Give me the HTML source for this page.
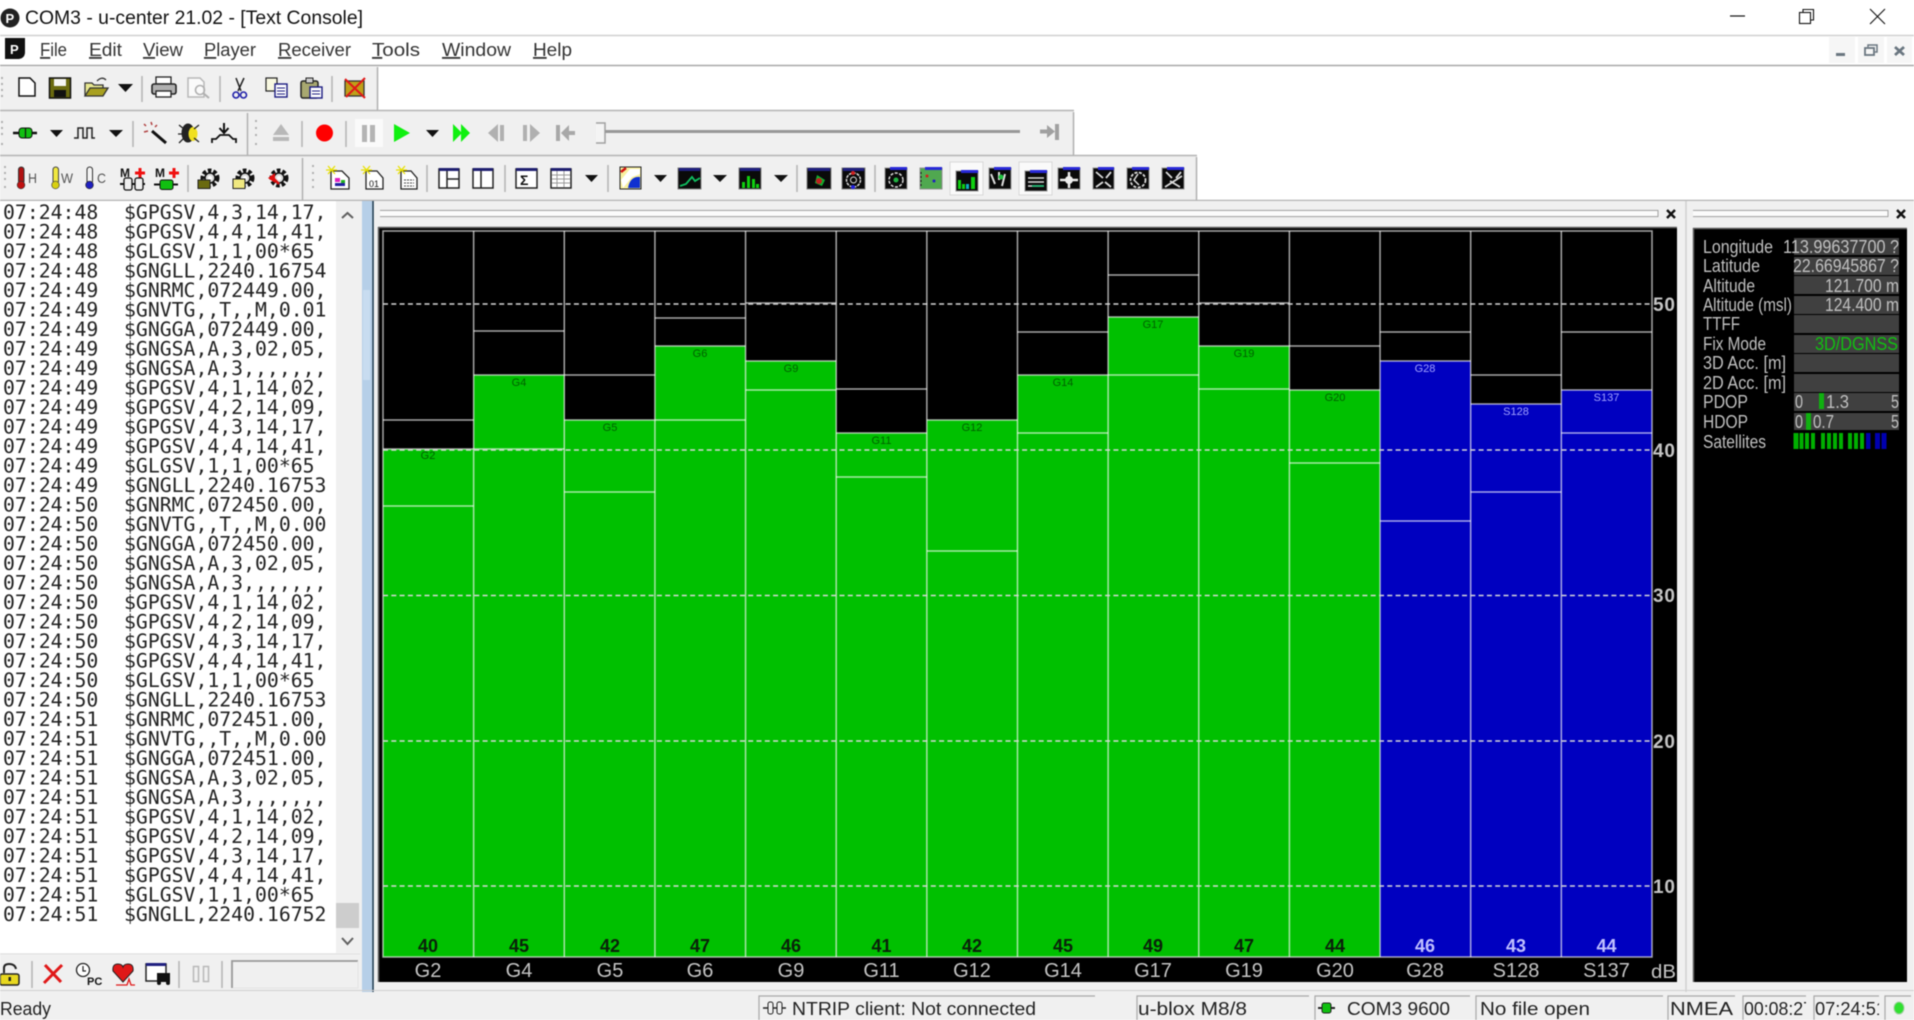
<!DOCTYPE html>
<html lang="en"><head><meta charset="utf-8"><title>COM3 - u-center 21.02 - [Text Console]</title>
<style>
html,body{margin:0;padding:0;background:#fff;width:1914px;height:1020px;overflow:hidden}
svg{display:block;filter:blur(.4px)}
text{font-family:"Liberation Sans",sans-serif}
.m text{font-family:"DejaVu Sans Mono","Liberation Mono",monospace;font-size:19.8px;fill:#222}
.mn text{font-size:18px;fill:#333}
.st text{font-size:18px;fill:#222}
.i text{font-size:18px;fill:#c0c0c0}
.sep line{stroke:#b4b4b4;stroke-width:1.5}
.arr polygon{fill:#111}
.gr rect{fill:#b0b0b0}
.top text{font-size:11px;text-anchor:middle}
.val text{font-size:18px;font-weight:bold;text-anchor:middle;fill:#0a200a}
.lab text{font-size:20px;text-anchor:middle;fill:#c4c4c4}
.ax text{font-size:19px;font-weight:bold;fill:#c4c4c4}
.bl{fill:none;stroke:rgba(255,255,255,.65);stroke-width:1.5}
.gear{fill:none;stroke:#111;stroke-width:4;stroke-dasharray:3.500 2}
.gi{fill:#ddd;stroke:#111;stroke-width:1.500}
</style></head><body>
<svg width="1914" height="1020" viewBox="0 0 1914 1020" xmlns="http://www.w3.org/2000/svg">
<rect width="1914" height="1020" fill="#fff"/>
<!-- title bar -->
<circle cx="10" cy="18" r="9.5" fill="#222"/><text x="5.5" y="23" font-size="13" font-weight="bold" fill="#fff">P</text>
<text x="25" y="24" font-size="19.5" fill="#111" textLength="338" lengthAdjust="spacingAndGlyphs">COM3 - u-center 21.02 - [Text Console]</text>
<line x1="1730" y1="16" x2="1745" y2="16" stroke="#111" stroke-width="1.2"/>
<rect x="1799.5" y="12.5" width="11" height="11" fill="#fff" stroke="#111" stroke-width="1.1"/>
<path d="M1803 12.5V9.5H1813.5V20H1810.5" fill="none" stroke="#111" stroke-width="1.1"/>
<path d="M1870 9L1885 24M1885 9L1870 24" stroke="#111" stroke-width="1.1"/>
<line x1="0" y1="35.5" x2="1914" y2="35.5" stroke="#d0d0d0" stroke-width="1.5"/>
<!-- menu bar -->
<path d="M5 38H25V52Q25 58 19 59H5Z" fill="#111"/><text x="10" y="54" font-size="13" font-weight="bold" fill="#fff">P</text>
<g class="mn">
<text x="40" y="56" textLength="27" lengthAdjust="spacingAndGlyphs"><tspan text-decoration="underline">F</tspan>ile</text>
<text x="89" y="56" textLength="33" lengthAdjust="spacingAndGlyphs"><tspan text-decoration="underline">E</tspan>dit</text>
<text x="143" y="56" textLength="40" lengthAdjust="spacingAndGlyphs"><tspan text-decoration="underline">V</tspan>iew</text>
<text x="204" y="56" textLength="52" lengthAdjust="spacingAndGlyphs"><tspan text-decoration="underline">P</tspan>layer</text>
<text x="278" y="56" textLength="73" lengthAdjust="spacingAndGlyphs"><tspan text-decoration="underline">R</tspan>eceiver</text>
<text x="372" y="56" textLength="48" lengthAdjust="spacingAndGlyphs"><tspan text-decoration="underline">T</tspan>ools</text>
<text x="442" y="56" textLength="69" lengthAdjust="spacingAndGlyphs"><tspan text-decoration="underline">W</tspan>indow</text>
<text x="533" y="56" textLength="39" lengthAdjust="spacingAndGlyphs"><tspan text-decoration="underline">H</tspan>elp</text>
</g>
<rect x="1829" y="37" width="26" height="26" fill="#f6f6f6"/><rect x="1858" y="37" width="26" height="26" fill="#f6f6f6"/><rect x="1887" y="37" width="25" height="26" fill="#f6f6f6"/>
<rect x="1836" y="53" width="9" height="3" fill="#6a7680"/>
<rect x="1865" y="48" width="9" height="7" fill="none" stroke="#6a7680" stroke-width="1.8"/><path d="M1868 47V45H1877V52H1875" fill="none" stroke="#6a7680" stroke-width="1.5"/>
<path d="M1895 47L1904 55M1904 47L1895 55" stroke="#6a7680" stroke-width="2.8"/>
<line x1="0" y1="65.5" x2="1914" y2="65.5" stroke="#a8a8a8" stroke-width="1.6"/>
<!-- toolbars -->
<rect x="0" y="67" width="377" height="43" fill="#f0f0f0"/>
<rect x="0" y="111" width="1073" height="44" fill="#f0f0f0"/>
<rect x="0" y="156" width="1197" height="44" fill="#f0f0f0"/>
<path d="M377.5 67V110M1073.5 112V155M1196.5 157V200M247.5 113V155M302.5 158V200" stroke="#b0b0b0" stroke-width="1.5" fill="none"/>
<path d="M0 110.5H1074M0 155.5H1197M0 200.5H1914" stroke="#b4b4b4" stroke-width="1.6" fill="none"/>
<g class="gr">
<rect x="1" y="77" width="2" height="2"/><rect x="1" y="83" width="2" height="2"/><rect x="1" y="89" width="2" height="2"/><rect x="1" y="95" width="2" height="2"/>
<rect x="1" y="121" width="2" height="2"/><rect x="1" y="127" width="2" height="2"/><rect x="1" y="133" width="2" height="2"/><rect x="1" y="143" width="2" height="2"/>
<rect x="4" y="166" width="2" height="2"/><rect x="4" y="172" width="2" height="2"/><rect x="4" y="178" width="2" height="2"/><rect x="4" y="186" width="2" height="2"/>
<rect x="255" y="120" width="2" height="2"/><rect x="255" y="127" width="2" height="2"/><rect x="255" y="134" width="2" height="2"/><rect x="255" y="143" width="2" height="2"/>
<rect x="312" y="165" width="2" height="2"/><rect x="312" y="172" width="2" height="2"/><rect x="312" y="179" width="2" height="2"/><rect x="312" y="186" width="2" height="2"/>
</g>
<g class="sep">
<line x1="142" y1="76" x2="142" y2="102"/><line x1="220" y1="76" x2="220" y2="102"/><line x1="332" y1="76" x2="332" y2="102"/>
<line x1="133" y1="121" x2="133" y2="147"/><line x1="302" y1="121" x2="302" y2="147"/><line x1="346" y1="121" x2="346" y2="147"/>
<line x1="188" y1="165" x2="188" y2="192"/><line x1="427" y1="165" x2="427" y2="192"/><line x1="505" y1="165" x2="505" y2="192"/><line x1="608" y1="165" x2="608" y2="192"/><line x1="797" y1="165" x2="797" y2="192"/><line x1="875" y1="165" x2="875" y2="192"/>
</g>
<g class="arr">
<polygon points="118,84 133,84 125.5,92"/>
<polygon points="50,130 63,130 56.5,137"/><polygon points="109,130 123,130 116,137"/><polygon points="426,130 439,130 432.5,137"/>
<polygon points="585,175 598,175 591.5,182"/><polygon points="654,175 667,175 660.5,182"/><polygon points="713,175 727,175 720,182"/><polygon points="774,175 788,175 781,182"/>
</g>
<!-- toolbar 1 icons -->
<path d="M19 78H30L35 83V96H19Z" fill="#fff" stroke="#111" stroke-width="1.5"/>
<rect x="49.5" y="78" width="21" height="20" fill="#6a6a10" stroke="#111" stroke-width="1.5"/><rect x="54" y="79" width="12" height="7" fill="#f4f4f4"/><rect x="54" y="90" width="12" height="7" fill="#111"/>
<path d="M85 96V83H92L94 85H103V88" fill="#e8e890" stroke="#333" stroke-width="1.3"/><path d="M85 96L90 88H108L103 96Z" fill="#a8a020" stroke="#333" stroke-width="1.3"/><path d="M97 81Q102 76 106 80" fill="none" stroke="#333" stroke-width="1.3"/>
<rect x="156" y="77" width="15" height="7" fill="#fff" stroke="#222" stroke-width="1.3"/><rect x="152" y="84" width="24" height="10" rx="2" fill="#b0b0b0" stroke="#222" stroke-width="1.6"/><rect x="156" y="91" width="15" height="6" fill="#fff" stroke="#222" stroke-width="1.3"/>
<path d="M188 78H200L204 82V97H188Z" fill="#fafafa" stroke="#b8b8b8" stroke-width="1.5"/><circle cx="200" cy="90" r="4.5" fill="none" stroke="#b0b0b0" stroke-width="1.6"/><path d="M203 93L209 98" stroke="#b0b0b0" stroke-width="2"/>
<path d="M236 78L241 91M244 78L238 91" stroke="#222" stroke-width="1.5"/><circle cx="236" cy="95" r="3" fill="none" stroke="#2020a8" stroke-width="1.6"/><circle cx="243.5" cy="95" r="3" fill="none" stroke="#2020a8" stroke-width="1.6"/>
<rect x="266" y="78" width="11" height="13" fill="#f8f8e0" stroke="#222" stroke-width="1.2"/><rect x="275" y="84" width="12" height="13" fill="#fff" stroke="#1a1a80" stroke-width="1.4"/><path d="M277 88H285M277 91H285M277 94H285" stroke="#1a1a80"/>
<rect x="301" y="81" width="17" height="17" rx="2" fill="#a8a870" stroke="#222" stroke-width="1.5"/><rect x="306" y="78" width="7" height="5" fill="#ccc" stroke="#222"/><rect x="310" y="87" width="12" height="11" fill="#fff" stroke="#1a1a80" stroke-width="1.4"/><path d="M312 91H320M312 94H320" stroke="#1a1a80"/>
<rect x="345" y="81" width="19" height="15" fill="#c0a018" stroke="#333" stroke-width="1.3"/><path d="M345 79L365 98M365 78L346 97" stroke="#e01818" stroke-width="2"/>
<!-- toolbar 2 icons -->
<path d="M13 133H37" stroke="#111" stroke-width="2.5"/><rect x="19" y="128" width="13" height="10" rx="3" fill="#10c010" stroke="#111"/><path d="M25.5 128V138" stroke="#111" stroke-width="1.2"/>
<path d="M74 138H78V128H83V138H87V128H92V138H95" fill="none" stroke="#222" stroke-width="1.5"/>
<path d="M152 131L166 143" stroke="#111" stroke-width="3"/><path d="M144 124L146 126M151 122L152 125M157 125L155 127M144 132L148 131" stroke="#b04040" stroke-width="1.5"/>
<ellipse cx="188" cy="133" rx="6.500" ry="9.500" fill="#222"/><ellipse cx="193" cy="134" rx="4.500" ry="7" fill="#f0e020"/><path d="M179 125L184 129M199 125L194 129M178 134H183M199 142L194 138M179 143L184 138" stroke="#222" stroke-width="1.300"/>
<path d="M224 123V132M219.500 128L224 133L228.500 128" fill="none" stroke="#111" stroke-width="2"/><path d="M212 143V139H216L220 135H229L233 139H236V143" fill="none" stroke="#111" stroke-width="1.800"/>
<polygon points="273,135 281,124 289,135" fill="#b8b8b8"/><rect x="273" y="137" width="16" height="4" fill="#b8b8b8"/>
<circle cx="324.500" cy="133" r="8.500" fill="#f00"/>
<rect x="355" y="119" width="28" height="28" fill="#fafafa"/><rect x="362" y="125" width="5" height="17" fill="#b4b4b4"/><rect x="370" y="125" width="5" height="17" fill="#b4b4b4"/>
<polygon points="394,124 410,133 394,142" fill="#10f010"/>
<polygon points="453,124 462,133 453,142" fill="#10f010"/><polygon points="461,124 470,133 461,142" fill="#10f010"/>
<polygon points="498,124 488,133 498,142" fill="#b0b0b0"/><rect x="500" y="125" width="4" height="16" fill="#b0b0b0"/>
<rect x="523" y="125" width="4" height="16" fill="#b0b0b0"/><polygon points="530,124 540,133 530,142" fill="#b0b0b0"/>
<rect x="556" y="125" width="4" height="16" fill="#a8a8a8"/><polygon points="569,125 561,133 569,141" fill="#a8a8a8"/><rect x="566" y="131" width="9" height="4" fill="#a8a8a8"/>
<path d="M596 123H605V143H596" fill="#f4f4f4" stroke="#a0a0a0" stroke-width="1.5"/>
<rect x="605" y="130" width="415" height="3" fill="#989898"/>
<rect x="1040" y="129.500" width="10" height="4" fill="#a0a0a0"/><polygon points="1047,125 1055,131.500 1047,138" fill="#a0a0a0"/><rect x="1055" y="124" width="4" height="16" fill="#a0a0a0"/>
<!-- toolbar 3 icons -->
<rect x="18.500" y="167" width="5.500" height="17" rx="2.700" fill="#b01010" stroke="#333"/><circle cx="21" cy="185" r="3.800" fill="#c01010" stroke="#333" stroke-width=".7"/><text x="28" y="183" font-size="14" fill="#555" textLength="9" lengthAdjust="spacingAndGlyphs">H</text>
<rect x="53" y="167" width="5.500" height="17" rx="2.700" fill="#f0e840" stroke="#444"/><circle cx="55.500" cy="185" r="3.800" fill="#d8d010" stroke="#444" stroke-width=".7"/><text x="61" y="183" font-size="14" fill="#555" textLength="12" lengthAdjust="spacingAndGlyphs">W</text>
<rect x="87" y="167" width="5.500" height="17" rx="2.700" fill="#f4f4f4" stroke="#333"/><circle cx="89.500" cy="185" r="3.800" fill="#2020c0" stroke="#222" stroke-width=".7"/><text x="97" y="183" font-size="14" fill="#555" textLength="9" lengthAdjust="spacingAndGlyphs">C</text>
<text x="120" y="177" font-size="12" font-weight="bold" fill="#111" textLength="10" lengthAdjust="spacingAndGlyphs">M</text><path d="M140 168V178M135 173H145" stroke="#f01010" stroke-width="3"/>
<path d="M120 184H145" stroke="#111" stroke-width="2"/><rect x="124" y="178" width="8" height="12" rx="2" fill="#f0f0f0" stroke="#111" stroke-width="1.300"/><rect x="135" y="178" width="8" height="12" rx="2" fill="#f0f0f0" stroke="#111" stroke-width="1.300"/>
<text x="155" y="177" font-size="12" font-weight="bold" fill="#111" textLength="10" lengthAdjust="spacingAndGlyphs">M</text><path d="M174 168V178M169 173H179" stroke="#f01010" stroke-width="3"/>
<path d="M154 184.500H178" stroke="#111" stroke-width="2"/><rect x="160" y="180" width="13" height="9.500" rx="2" fill="#10c010" stroke="#111"/>
<circle cx="210" cy="178" r="7.500" class="gear"/><circle cx="210" cy="178" r="5" class="gi"/><circle cx="210" cy="178" r="2" fill="#fff"/><rect x="198" y="180" width="12" height="8.500" fill="#6a6a10" stroke="#222"/>
<circle cx="245" cy="178" r="7.500" class="gear"/><circle cx="245" cy="178" r="5" class="gi"/><circle cx="245" cy="178" r="2" fill="#fff"/><path d="M233 188.500V179H245V188.500Z" fill="#f0e880" stroke="#222"/>
<circle cx="279" cy="178" r="7.500" class="gear"/><circle cx="279" cy="178" r="5" class="gi"/><circle cx="279" cy="178" r="2" fill="#fff"/><path d="M268 178L275 173V183Z" fill="#e01010"/><path d="M273 178L279 184" stroke="#e01010" stroke-width="2.400"/>
<g fill="#fff" stroke="#222" stroke-width="1.300"><path d="M331 171H342L349 178V189H331Z"/><path d="M366 171H377L383 178V189H366Z"/><path d="M401 171H411L417 178V189H401Z"/></g>
<path d="M328 166L335 174M335 166L328 174M326 170H337" stroke="#e8e000" stroke-width="1.300"/><path d="M363 166L370 174M370 166L363 174M361 170H372" stroke="#e8e000" stroke-width="1.300"/><path d="M398 166L405 174M405 166L398 174M396 170H407" stroke="#e8e000" stroke-width="1.300"/>
<rect x="335" y="178" width="5" height="4" fill="#e020c0"/><rect x="341" y="180" width="4" height="4" fill="#20b020"/><rect x="335" y="183" width="10" height="3" fill="#2020a0"/>
<text x="369" y="187" font-size="9" fill="#111">01</text>
<path d="M404 180H414M404 183H414M404 186H414" stroke="#444" stroke-dasharray="2 1"/>
<g fill="#fff" stroke="#222" stroke-width="1.500"><rect x="439" y="169" width="20" height="19"/><rect x="473" y="169" width="20" height="19"/><rect x="516" y="169" width="21" height="19"/><rect x="551" y="169" width="20" height="19"/></g>
<rect x="439" y="168" width="20" height="3" fill="#202070"/><rect x="473" y="168" width="20" height="3" fill="#202070"/><rect x="516" y="168" width="21" height="3" fill="#202070"/><rect x="551" y="168" width="20" height="3" fill="#202070"/>
<path d="M447 171V188M447 179H459M481 171V188" stroke="#222" stroke-width="1.500"/>
<text x="520" y="185" font-size="14" font-weight="bold" font-family="Liberation Serif" fill="#111">Σ</text>
<path d="M552 175H570M552 179H570M552 183H570M557 171V187M564 171V187" stroke="#999"/>
<!-- view icons -->
<rect x="620" y="167" width="21" height="22" fill="#f8f0a0" stroke="#222"/><path d="M621 180L630 169H640V174L632 177L623 188Z" fill="#fff"/><path d="M628 188Q630 176 640 177V188Z" fill="#1030d0"/><path d="M621 172L626 168" stroke="#d01010" stroke-width="2.500"/>
<rect x="678" y="168" width="23" height="21" fill="#0a0a0a" stroke="#808080"/><rect x="679" y="168" width="21" height="3" fill="#202080"/><path d="M680 186L686 184L692 177L695 181L700 178" stroke="#10c060" stroke-width="1.800" fill="none"/>
<rect x="739" y="168" width="22" height="21" fill="#0a0a0a" stroke="#808080"/><rect x="740" y="168" width="20" height="3" fill="#202080"/><g fill="#10d010"><rect x="742" y="182" width="3" height="6"/><rect x="747" y="176" width="3" height="12"/><rect x="752" y="179" width="3" height="9"/><rect x="756" y="184" width="3" height="4"/></g>
<rect x="807" y="168" width="24" height="21" fill="#0a0a0a" stroke="#808080"/><rect x="808" y="168" width="22" height="3" fill="#202080"/><path d="M817 175L825 180L822 186L815 183Z" fill="#10b030"/><circle cx="819" cy="181" r="3" fill="#c02020"/>
<rect x="842" y="168" width="23" height="21" fill="#0a0a0a" stroke="#808080"/><rect x="843" y="168" width="21" height="3" fill="#202080"/><circle cx="853.500" cy="180" r="7" fill="none" stroke="#ddd" stroke-width="1.500" stroke-dasharray="3 1"/><circle cx="853.500" cy="180" r="3" fill="none" stroke="#ddd"/><circle cx="853" cy="173" r="2" fill="#d02020"/><circle cx="853" cy="187" r="2" fill="#2020e0"/>
<!-- highlighted -->
<rect x="950" y="162" width="33" height="33" fill="#fafafa" stroke="#d8d8d8"/>
<rect x="1019" y="162" width="33" height="33" fill="#fafafa" stroke="#d8d8d8"/>
<g stroke="#909090">
<rect x="885" y="168" width="22" height="21" fill="#0a0a0a"/><rect x="920" y="168" width="22" height="21" fill="#50a850"/><rect x="956" y="171" width="22" height="20" fill="#0a0a0a"/><rect x="989" y="168" width="22" height="21" fill="#0a0a0a"/><rect x="1025" y="171" width="22" height="20" fill="#0a0a0a"/><rect x="1058" y="168" width="22" height="21" fill="#0a0a0a"/><rect x="1093" y="168" width="21" height="21" fill="#0a0a0a"/><rect x="1127" y="168" width="22" height="21" fill="#0a0a0a"/><rect x="1162" y="168" width="22" height="21" fill="#0a0a0a"/>
</g>
<g fill="#2828d8"><rect x="890" y="167" width="17" height="3"/><rect x="925" y="167" width="17" height="3"/><rect x="961" y="170" width="17" height="3"/><rect x="994" y="167" width="17" height="3"/><rect x="1030" y="170" width="17" height="3"/><rect x="1063" y="167" width="17" height="3"/><rect x="1098" y="167" width="16" height="3"/><rect x="1132" y="167" width="17" height="3"/><rect x="1167" y="167" width="17" height="3"/></g>
<circle cx="896" cy="180" r="7" fill="none" stroke="#ddd" stroke-width="1.500" stroke-dasharray="3 1.500"/><circle cx="896" cy="180" r="2.500" fill="#20b040"/>
<circle cx="927" cy="176" r="1.500" fill="#d02020"/><circle cx="934" cy="181" r="1.500" fill="#2020c0"/><path d="M921 172V188" stroke="#111" stroke-dasharray="2 2"/>
<g fill="#10d010"><rect x="958" y="180" width="3" height="9"/><rect x="962" y="184" width="3" height="5"/><rect x="971" y="177" width="4" height="12"/></g><rect x="966" y="184" width="3" height="5" fill="#10b0c0"/>
<path d="M991 174L995 184M1005 174L1002 186M999 172V180" stroke="#ddd" stroke-width="2"/><circle cx="1001" cy="177" r="2.500" fill="#20c040"/>
<path d="M1028 178H1044M1028 182H1044M1028 186H1044" stroke="#ddd" stroke-width="1.500"/><path d="M1032 186H1044" stroke="#10c070" stroke-width="1.500"/>
<path d="M1069 172V188M1060 180H1078" stroke="#eee" stroke-width="2.500"/><circle cx="1069" cy="180" r="4" fill="#eee"/>
<path d="M1096 172L1103 178M1111 172L1106 178M1096 187L1103 182M1111 187L1105 182" stroke="#ddd" stroke-width="1.800"/>
<circle cx="1138" cy="180" r="7.500" fill="none" stroke="#ddd" stroke-width="1.800" stroke-dasharray="3 1.500"/><path d="M1138 174L1134 180L1139 185" stroke="#ddd" stroke-width="1.500" fill="none"/>
<path d="M1166 172L1172 178M1181 172L1176 178M1165 187L1182 176M1170 181L1180 187" stroke="#ddd" stroke-width="1.800"/>
<!-- console -->
<rect x="0" y="201" width="362" height="791" fill="#fff"/>
<rect x="336" y="201" width="24" height="752" fill="#f0f0f0"/>
<rect x="336" y="903" width="23" height="25" fill="#cdcdcd"/>
<path d="M342 218L347.500 213L353 218M342 938L347.500 944L353 938" fill="none" stroke="#606060" stroke-width="2"/>
<g class="m">
<text x="3" y="219">07:24:48</text><text x="124" y="219">$GPGSV,4,3,14,17,</text>
<text x="3" y="238.500">07:24:48</text><text x="124" y="238.500">$GPGSV,4,4,14,41,</text>
<text x="3" y="258">07:24:48</text><text x="124" y="258">$GLGSV,1,1,00*65</text>
<text x="3" y="277.500">07:24:48</text><text x="124" y="277.500">$GNGLL,2240.16754</text>
<text x="3" y="297">07:24:49</text><text x="124" y="297">$GNRMC,072449.00,</text>
<text x="3" y="316.500">07:24:49</text><text x="124" y="316.500">$GNVTG,,T,,M,0.01</text>
<text x="3" y="336">07:24:49</text><text x="124" y="336">$GNGGA,072449.00,</text>
<text x="3" y="355.500">07:24:49</text><text x="124" y="355.500">$GNGSA,A,3,02,05,</text>
<text x="3" y="375">07:24:49</text><text x="124" y="375">$GNGSA,A,3,,,,,,,</text>
<text x="3" y="394.500">07:24:49</text><text x="124" y="394.500">$GPGSV,4,1,14,02,</text>
<text x="3" y="414">07:24:49</text><text x="124" y="414">$GPGSV,4,2,14,09,</text>
<text x="3" y="433.500">07:24:49</text><text x="124" y="433.500">$GPGSV,4,3,14,17,</text>
<text x="3" y="453">07:24:49</text><text x="124" y="453">$GPGSV,4,4,14,41,</text>
<text x="3" y="472.500">07:24:49</text><text x="124" y="472.500">$GLGSV,1,1,00*65</text>
<text x="3" y="492">07:24:49</text><text x="124" y="492">$GNGLL,2240.16753</text>
<text x="3" y="511.500">07:24:50</text><text x="124" y="511.500">$GNRMC,072450.00,</text>
<text x="3" y="531">07:24:50</text><text x="124" y="531">$GNVTG,,T,,M,0.00</text>
<text x="3" y="550.500">07:24:50</text><text x="124" y="550.500">$GNGGA,072450.00,</text>
<text x="3" y="570">07:24:50</text><text x="124" y="570">$GNGSA,A,3,02,05,</text>
<text x="3" y="589.500">07:24:50</text><text x="124" y="589.500">$GNGSA,A,3,,,,,,,</text>
<text x="3" y="609">07:24:50</text><text x="124" y="609">$GPGSV,4,1,14,02,</text>
<text x="3" y="628.500">07:24:50</text><text x="124" y="628.500">$GPGSV,4,2,14,09,</text>
<text x="3" y="648">07:24:50</text><text x="124" y="648">$GPGSV,4,3,14,17,</text>
<text x="3" y="667.500">07:24:50</text><text x="124" y="667.500">$GPGSV,4,4,14,41,</text>
<text x="3" y="687">07:24:50</text><text x="124" y="687">$GLGSV,1,1,00*65</text>
<text x="3" y="706.500">07:24:50</text><text x="124" y="706.500">$GNGLL,2240.16753</text>
<text x="3" y="726">07:24:51</text><text x="124" y="726">$GNRMC,072451.00,</text>
<text x="3" y="745.500">07:24:51</text><text x="124" y="745.500">$GNVTG,,T,,M,0.00</text>
<text x="3" y="765">07:24:51</text><text x="124" y="765">$GNGGA,072451.00,</text>
<text x="3" y="784.500">07:24:51</text><text x="124" y="784.500">$GNGSA,A,3,02,05,</text>
<text x="3" y="804">07:24:51</text><text x="124" y="804">$GNGSA,A,3,,,,,,,</text>
<text x="3" y="823.500">07:24:51</text><text x="124" y="823.500">$GPGSV,4,1,14,02,</text>
<text x="3" y="843">07:24:51</text><text x="124" y="843">$GPGSV,4,2,14,09,</text>
<text x="3" y="862.500">07:24:51</text><text x="124" y="862.500">$GPGSV,4,3,14,17,</text>
<text x="3" y="882">07:24:51</text><text x="124" y="882">$GPGSV,4,4,14,41,</text>
<text x="3" y="901.500">07:24:51</text><text x="124" y="901.500">$GLGSV,1,1,00*65</text>
<text x="3" y="921">07:24:51</text><text x="124" y="921">$GNGLL,2240.16752</text>
</g>
<!-- console bottom toolbar -->
<rect x="0" y="953" width="362" height="39" fill="#f0f0f0"/>
<line x1="0" y1="954" x2="360" y2="954" stroke="#e0e0e0"/>
<rect x="0" y="974" width="19" height="11" rx="2" fill="#e8d820" stroke="#222" stroke-width="1.500"/><path d="M4 973V968Q4 964 9 964Q15 964 16 969" fill="none" stroke="#222" stroke-width="2"/><rect x="8.500" y="977" width="2.500" height="4" fill="#222"/>
<line x1="32" y1="961" x2="32" y2="988" stroke="#b4b4b4" stroke-width="1.500"/>
<path d="M45 965L61 982M62 965L44 983" stroke="#e01818" stroke-width="3"/>
<circle cx="83" cy="970" r="6.500" fill="#fff" stroke="#222" stroke-width="1.300"/><path d="M83 966V971H86" fill="none" stroke="#222" stroke-width="1.200"/><text x="87" y="985" font-size="11" font-weight="bold" fill="#111">PC</text>
<path d="M123 982L113 971Q112 964 118 964Q122 964 123 967Q124 964 128 964Q134 964 133 971Z" fill="#e01818" stroke="#222"/><path d="M116 985H127L129 979L131 985H135" stroke="#e01818" stroke-width="1.300" fill="none"/>
<rect x="146" y="964" width="20" height="17" fill="#fff" stroke="#222" stroke-width="1.500"/><rect x="146" y="963" width="20" height="3" fill="#202080"/><rect x="157" y="973" width="13" height="9" fill="#111"/><circle cx="159" cy="983" r="2" fill="#111"/><circle cx="168" cy="983" r="2" fill="#111"/>
<line x1="179" y1="961" x2="179" y2="988" stroke="#b4b4b4" stroke-width="1.500"/>
<rect x="193.500" y="966.500" width="5" height="15" fill="none" stroke="#b8b8b8" stroke-width="1.500"/><rect x="203.500" y="966.500" width="5" height="15" fill="none" stroke="#b8b8b8" stroke-width="1.500"/>
<line x1="222" y1="961" x2="222" y2="988" stroke="#b4b4b4" stroke-width="1.500"/>
<path d="M232 988V961H358" fill="none" stroke="#999" stroke-width="1.800"/><path d="M233 988H358V961" fill="none" stroke="#e4e4e4"/>
<!-- blue splitter -->
<rect x="360" y="201" width="3" height="791" fill="#f0f0f0"/>
<rect x="362" y="201" width="10" height="791" fill="#b6cfe8"/>
<rect x="363" y="290" width="7" height="90" fill="#c8dcf0"/>
<line x1="373" y1="201" x2="373" y2="992" stroke="#103048" stroke-width="1.500"/>
<!-- panes background -->
<rect x="374" y="201" width="1540" height="791" fill="#f0f0f0"/>
<line x1="1686" y1="201" x2="1686" y2="992" stroke="#d0d0d0" stroke-width="1.500"/>
<path d="M380 210.500H1658M380 216.500H1658" stroke="#a8a8a8" stroke-width="1.200"/><rect x="380" y="211" width="1278" height="5" fill="#fbfbfb"/><path d="M1658 210V217" stroke="#a0a0a0"/>
<path d="M1667 210L1675 218M1675 210L1667 218" stroke="#111" stroke-width="2.400"/>
<path d="M1693 210.500H1888M1693 216.500H1888" stroke="#a8a8a8" stroke-width="1.200"/><rect x="1693" y="211" width="195" height="5" fill="#fbfbfb"/><path d="M1888 210V217" stroke="#a0a0a0"/>
<path d="M1897 210L1905 218M1905 210L1897 218" stroke="#111" stroke-width="2.400"/>
<!-- chart -->
<rect x="378" y="227" width="1299" height="755" fill="#000"/>
<path d="M378 227.500H1677M378.500 227V982" stroke="#606060" stroke-width="1.500"/>
<rect x="383" y="449" width="90.640" height="508" fill="#00c000"/>
<rect x="473.640" y="375" width="90.640" height="582" fill="#00c000"/>
<rect x="564.280" y="420" width="90.640" height="537" fill="#00c000"/>
<rect x="654.920" y="346" width="90.640" height="611" fill="#00c000"/>
<rect x="745.560" y="361" width="90.640" height="596" fill="#00c000"/>
<rect x="836.200" y="433" width="90.640" height="524" fill="#00c000"/>
<rect x="926.840" y="420" width="90.640" height="537" fill="#00c000"/>
<rect x="1017.480" y="375" width="90.640" height="582" fill="#00c000"/>
<rect x="1108.120" y="317" width="90.640" height="640" fill="#00c000"/>
<rect x="1198.760" y="346" width="90.640" height="611" fill="#00c000"/>
<rect x="1289.400" y="390" width="90.640" height="567" fill="#00c000"/>
<rect x="1380.040" y="361" width="90.640" height="596" fill="#0000c0"/>
<rect x="1470.680" y="404" width="90.640" height="553" fill="#0000c0"/>
<rect x="1561.320" y="390" width="90.680" height="567" fill="#0000c0"/>
<g class="bl">
<rect x="383" y="231" width="1269" height="726"/>
<path d="M473.640 231V957M564.280 231V957M654.920 231V957M745.560 231V957M836.200 231V957M926.840 231V957M1017.480 231V957M1108.120 231V957M1198.760 231V957M1289.400 231V957M1380.040 231V957M1470.680 231V957M1561.320 231V957"/>
<path d="M383 420H473.640M383 449H473.640M383 506H473.640"/>
<path d="M473.640 331H564.280M473.640 375H564.280M473.640 449H564.280"/>
<path d="M564.280 375H654.920M564.280 420H654.920M564.280 492H654.920"/>
<path d="M654.920 318H745.560M654.920 346H745.560M654.920 420H745.560"/>
<path d="M745.560 303H836.200M745.560 361H836.200M745.560 390H836.200"/>
<path d="M836.200 389H926.840M836.200 433H926.840M836.200 477H926.840"/>
<path d="M926.840 420H1017.480M926.840 551H1017.480"/>
<path d="M1017.480 332H1108.120M1017.480 375H1108.120M1017.480 433H1108.120"/>
<path d="M1108.120 275H1198.760M1108.120 317H1198.760M1108.120 375H1198.760"/>
<path d="M1198.760 303H1289.400M1198.760 346H1289.400M1198.760 389H1289.400"/>
<path d="M1289.400 346H1380.040M1289.400 390H1380.040M1289.400 463H1380.040"/>
<path d="M1380.040 332H1470.680M1380.040 361H1470.680M1380.040 521H1470.680"/>
<path d="M1470.680 375H1561.320M1470.680 404H1561.320M1470.680 492H1561.320"/>
<path d="M1561.320 332H1652M1561.320 390H1652M1561.320 433H1652"/>
</g>
<g stroke="#d8d8d8" stroke-width="1.500" stroke-dasharray="5 3.300" fill="none">
<path d="M383 304H1650M383 450H1650M383 595.500H1650M383 741H1650M383 886H1650"/>
</g>
<g class="top" fill="#006000">
<text x="428" y="459">G2</text><text x="519" y="386">G4</text><text x="610" y="431">G5</text><text x="700" y="357">G6</text><text x="791" y="372">G9</text><text x="881.500" y="444">G11</text><text x="972" y="431">G12</text><text x="1063" y="386">G14</text><text x="1153" y="328">G17</text><text x="1244" y="357">G19</text><text x="1335" y="401">G20</text>
</g>
<g class="top" fill="#a0a0ff">
<text x="1425" y="372">G28</text><text x="1516" y="415">S128</text><text x="1606.500" y="401">S137</text>
</g>
<g class="val">
<text x="428" y="952">40</text><text x="519" y="952">45</text><text x="610" y="952">42</text><text x="700" y="952">47</text><text x="791" y="952">46</text><text x="881.500" y="952">41</text><text x="972" y="952">42</text><text x="1063" y="952">45</text><text x="1153" y="952">49</text><text x="1244" y="952">47</text><text x="1335" y="952">44</text>
<text x="1425" y="952" style="fill:#c0c0ff">46</text><text x="1516" y="952" style="fill:#c0c0ff">43</text><text x="1606.500" y="952" style="fill:#c0c0ff">44</text>
</g>
<g class="lab">
<text x="428" y="977">G2</text><text x="519" y="977">G4</text><text x="610" y="977">G5</text><text x="700" y="977">G6</text><text x="791" y="977">G9</text><text x="881.500" y="977">G11</text><text x="972" y="977">G12</text><text x="1063" y="977">G14</text><text x="1153" y="977">G17</text><text x="1244" y="977">G19</text><text x="1335" y="977">G20</text><text x="1425" y="977">G28</text><text x="1516" y="977">S128</text><text x="1606.500" y="977">S137</text>
</g>
<g class="ax">
<text x="1653" y="311" textLength="22">50</text><text x="1653" y="457" textLength="22">40</text><text x="1653" y="602" textLength="22">30</text><text x="1653" y="748" textLength="22">20</text><text x="1653" y="893" textLength="22">10</text>
</g>
<text x="1651" y="978" font-size="19" fill="#c4c4c4" textLength="25" lengthAdjust="spacingAndGlyphs">dB</text>
<!-- info pane -->
<rect x="1693" y="228" width="214" height="754" fill="#000"/>
<path d="M1693 228.500H1907M1693.500 228V982" stroke="#606060" stroke-width="1.500"/>
<g fill="#404040">
<rect x="1794" y="238" width="105" height="17"/><rect x="1794" y="257" width="105" height="18"/><rect x="1794" y="276" width="105" height="18"/><rect x="1794" y="296" width="105" height="18"/><rect x="1794" y="315" width="105" height="18"/><rect x="1794" y="335" width="105" height="18"/><rect x="1794" y="354" width="105" height="18"/><rect x="1794" y="374" width="105" height="18"/><rect x="1794" y="393" width="105" height="18"/><rect x="1794" y="413" width="105" height="17"/>
</g>
<g class="i">
<text x="1703" y="253" textLength="70" lengthAdjust="spacingAndGlyphs">Longitude</text>
<text x="1703" y="272" textLength="57" lengthAdjust="spacingAndGlyphs">Latitude</text>
<text x="1703" y="292" textLength="52" lengthAdjust="spacingAndGlyphs">Altitude</text>
<text x="1703" y="311" textLength="89" lengthAdjust="spacingAndGlyphs">Altitude (msl)</text>
<text x="1703" y="330" textLength="37" lengthAdjust="spacingAndGlyphs">TTFF</text>
<text x="1703" y="350" textLength="63" lengthAdjust="spacingAndGlyphs">Fix Mode</text>
<text x="1703" y="369" textLength="83" lengthAdjust="spacingAndGlyphs">3D Acc. [m]</text>
<text x="1703" y="389" textLength="83" lengthAdjust="spacingAndGlyphs">2D Acc. [m]</text>
<text x="1703" y="408" textLength="45" lengthAdjust="spacingAndGlyphs">PDOP</text>
<text x="1703" y="428" textLength="45" lengthAdjust="spacingAndGlyphs">HDOP</text>
<text x="1703" y="448" textLength="63" lengthAdjust="spacingAndGlyphs">Satellites</text>
<text x="1783" y="253" textLength="116" lengthAdjust="spacingAndGlyphs">113.99637700 ?</text>
<text x="1793" y="272" textLength="106" lengthAdjust="spacingAndGlyphs">22.66945867 ?</text>
<text x="1825" y="292" textLength="74" lengthAdjust="spacingAndGlyphs">121.700 m</text>
<text x="1825" y="311" textLength="74" lengthAdjust="spacingAndGlyphs">124.400 m</text>
<text x="1815" y="350" textLength="83" lengthAdjust="spacingAndGlyphs" style="fill:#10c010">3D/DGNSS</text>
<text x="1795" y="408" textLength="8" lengthAdjust="spacingAndGlyphs">0</text><text x="1826" y="408" textLength="23" lengthAdjust="spacingAndGlyphs">1.3</text><text x="1891" y="408" textLength="8" lengthAdjust="spacingAndGlyphs">5</text>
<text x="1795" y="428" textLength="8" lengthAdjust="spacingAndGlyphs">0</text><text x="1813" y="428" textLength="21" lengthAdjust="spacingAndGlyphs">0.7</text><text x="1891" y="428" textLength="8" lengthAdjust="spacingAndGlyphs">5</text>
</g>
<rect x="1819" y="393" width="5" height="16" fill="#10b010"/>
<rect x="1806" y="413" width="5" height="17" fill="#10b010"/>
<g fill="#00b000">
<rect x="1793.500" y="433" width="5" height="16"/><rect x="1799.500" y="433" width="4" height="16"/><rect x="1805" y="433" width="4" height="16"/><rect x="1811" y="433" width="4" height="16"/>
<rect x="1821" y="433" width="4" height="16"/><rect x="1827" y="433" width="4" height="16"/><rect x="1833" y="433" width="4" height="16"/><rect x="1839" y="433" width="4" height="16"/>
<rect x="1848" y="433" width="4" height="16"/><rect x="1854" y="433" width="4" height="16"/><rect x="1860" y="433" width="4" height="16"/>
</g>
<g fill="#0000b0">
<rect x="1866" y="433" width="4.500" height="16"/><rect x="1875" y="433" width="5" height="16"/><rect x="1881.500" y="433" width="5" height="16"/>
</g>
<!-- status bar -->
<rect x="0" y="992" width="1914" height="28" fill="#f0f0f0"/>
<line x1="0" y1="990.500" x2="1914" y2="990.500" stroke="#d0d0d0"/>
<g class="st">
<text x="0" y="1015" textLength="51" lengthAdjust="spacingAndGlyphs">Ready</text>
<text x="792" y="1015" textLength="244" lengthAdjust="spacingAndGlyphs">NTRIP client: Not connected</text>
<text x="1138" y="1015" textLength="109" lengthAdjust="spacingAndGlyphs">u-blox M8/8</text>
<text x="1347" y="1015" textLength="103" lengthAdjust="spacingAndGlyphs">COM3 9600</text>
<text x="1480" y="1015" textLength="110" lengthAdjust="spacingAndGlyphs">No file open</text>
<text x="1670" y="1015" textLength="63" lengthAdjust="spacingAndGlyphs">NMEA</text>
<text x="1744" y="1015" textLength="69" lengthAdjust="spacingAndGlyphs">00:08:27</text>
<text x="1815" y="1015" textLength="71" lengthAdjust="spacingAndGlyphs">07:24:51</text>
</g>
<rect x="1806" y="997" width="7.500" height="23" fill="#f0f0f0"/><rect x="1879" y="997" width="8" height="23" fill="#f0f0f0"/>
<g fill="none" stroke="#a8a8a8" stroke-width="1.200">
<path d="M759 1020V996H1095"/><path d="M1137 1020V996H1309"/><path d="M1315 1020V996H1470"/><path d="M1476 1020V996H1663"/><path d="M1668 1020V996H1735"/><path d="M1743 1020V996H1806"/><path d="M1814 1020V996H1879"/><path d="M1885 1020V996H1911"/>
</g>
<path d="M763 1008H786" stroke="#222" stroke-width="1.500"/><rect x="768" y="1002" width="5" height="12" rx="2" fill="#f0f0f0" stroke="#222"/><rect x="777" y="1002" width="5" height="12" rx="2" fill="#f0f0f0" stroke="#222"/>
<path d="M1318 1008H1335" stroke="#222" stroke-width="2"/><rect x="1322" y="1003" width="9" height="10" rx="2" fill="#10c010" stroke="#222"/>
<ellipse cx="1899" cy="1008" rx="5" ry="6" fill="#30e030" stroke="#a0d0a0"/>
</svg>
</body></html>
